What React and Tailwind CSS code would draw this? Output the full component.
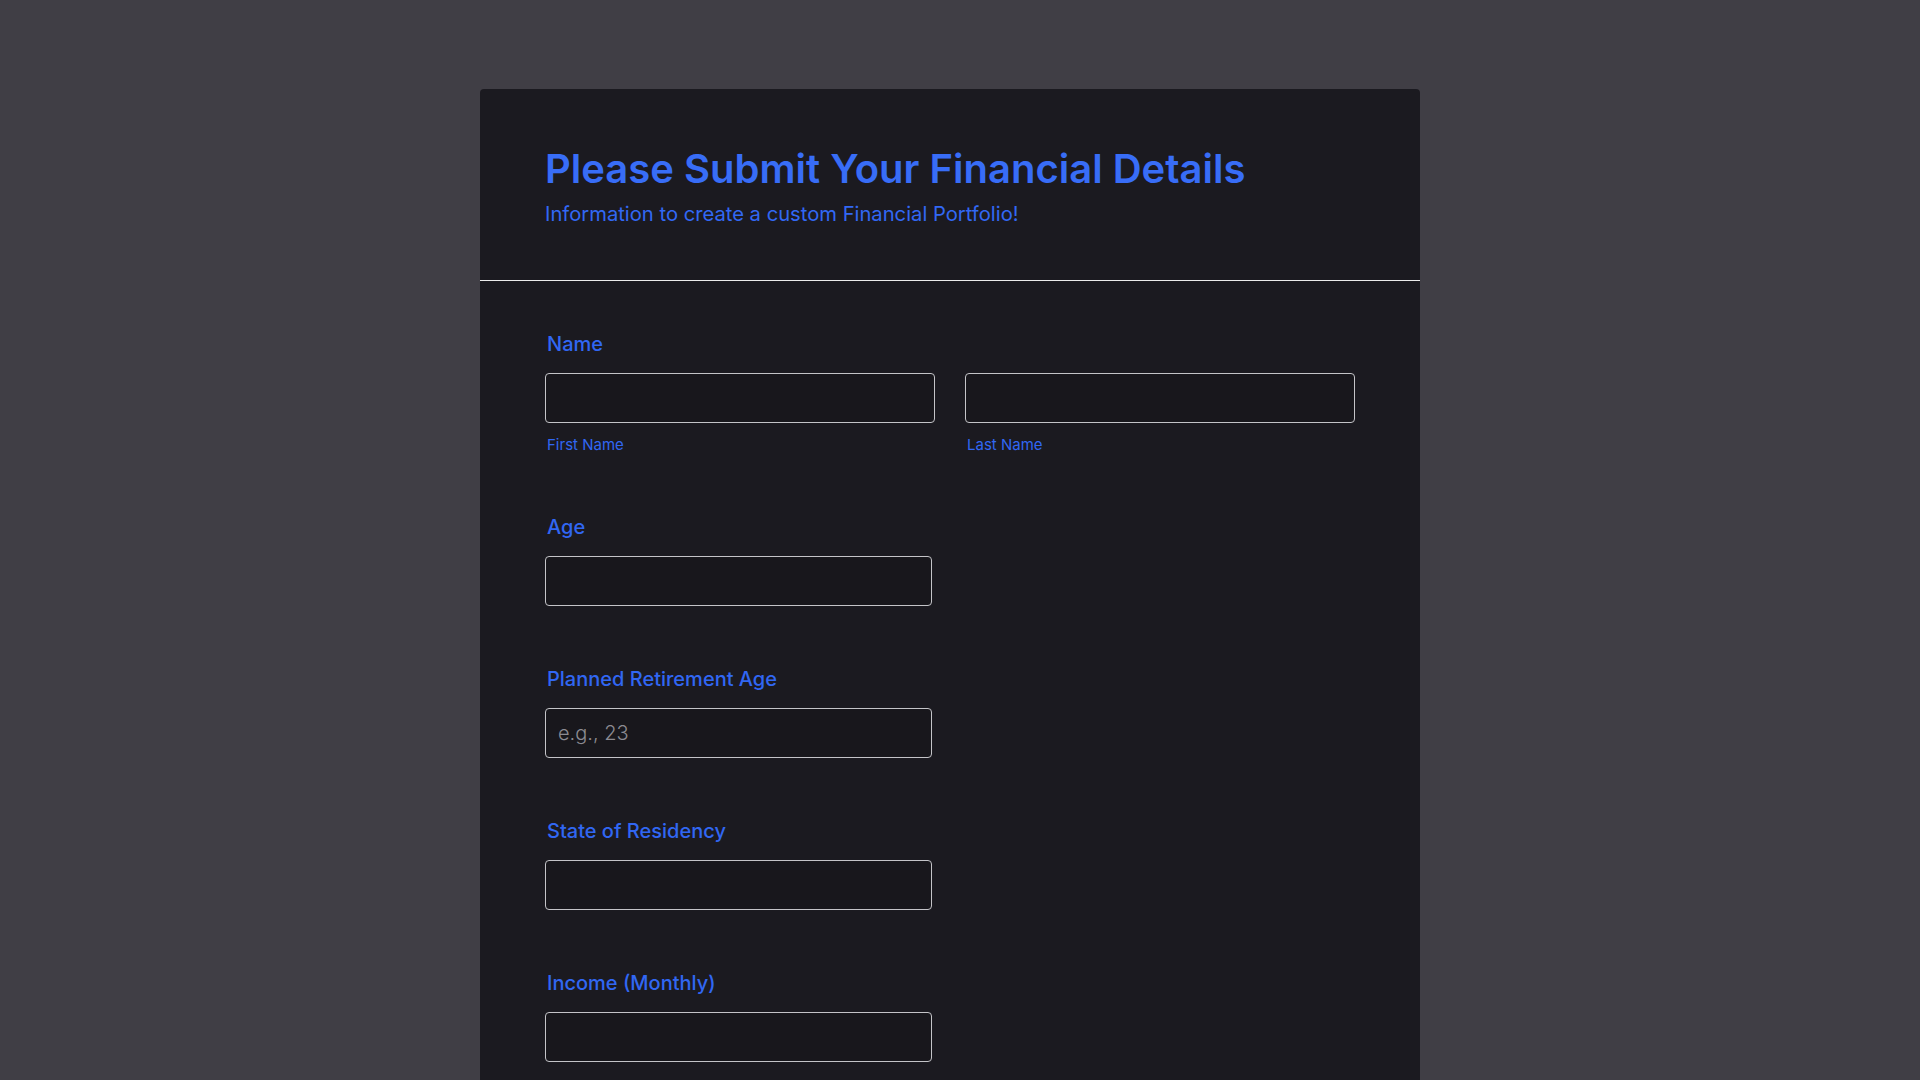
import { useState } from 'react'

const singleFields = [
  { id: 'age', label: 'Age', placeholder: '' },
  { id: 'retirement', label: 'Planned Retirement Age', placeholder: 'e.g., 23' },
  { id: 'state', label: 'State of Residency', placeholder: '' },
  { id: 'income', label: 'Income (Monthly)', placeholder: '' },
  { id: 'expenses', label: 'Expenses (Monthly)', placeholder: '' },
  { id: 'savings', label: 'Current Savings', placeholder: '' },
  { id: 'debt', label: 'Total Debt', placeholder: '' },
]

const inputClass =
  'h-[50px] w-full rounded-[4px] border border-[#c4c4c8] bg-[#18171c] px-[12px] text-[20px] font-light text-[#e5e5e5] outline-none placeholder:text-[#8b8a91]'

function FieldLabel({ children, htmlFor }) {
  return (
    <label
      htmlFor={htmlFor}
      className="mb-[17px] ml-[2px] block pt-[2px] text-[20px] font-medium leading-[24px] text-[#3167f3]"
    >
      {children}
    </label>
  )
}

function App() {
  const [values, setValues] = useState({})

  const update = (id) => (event) =>
    setValues((current) => ({ ...current, [id]: event.target.value }))

  return (
    <div
      className="h-screen overflow-y-scroll bg-[#403e45]"
      style={{ fontFamily: 'Inter, "Noto Sans", sans-serif' }}
    >
      <div className="pb-[80px] pr-[20px] pt-[89px]">
        <form className="mx-auto w-[940px] rounded-[4px] bg-[#1b1a20]">
          <header className="border-b border-[#ececec] pb-[52px] pl-[65px] pr-[65px] pt-[56px]">
            <h1 className="text-[40px] font-semibold leading-[48px] text-[#386df7]">
              Please Submit Your Financial Details
            </h1>
            <p className="mt-[7px] text-[20.2px] leading-[28px] text-[#3268f4]">
              Information to create a custom Financial Portfolio!
            </p>
          </header>

          <div className="flex flex-col gap-[59px] px-[65px] pb-[70px] pt-[49px]">
            <div>
              <FieldLabel htmlFor="first">Name</FieldLabel>
              <div className="grid grid-cols-2 gap-[30px]">
                <div>
                  <input id="first" className={inputClass} value={values.first || ''} onChange={update('first')} />
                  <span className="ml-[2px] mt-[12px] block text-[15px] leading-[19px] text-[#3167f3]">First Name</span>
                </div>
                <div>
                  <input id="last" className={inputClass} value={values.last || ''} onChange={update('last')} />
                  <span className="ml-[2px] mt-[12px] block text-[15px] leading-[19px] text-[#3167f3]">Last Name</span>
                </div>
              </div>
            </div>

            {singleFields.map((field) => (
              <div key={field.id}>
                <FieldLabel htmlFor={field.id}>{field.label}</FieldLabel>
                <div className="w-[387px]">
                  <input
                    id={field.id}
                    placeholder={field.placeholder}
                    className={inputClass}
                    value={values[field.id] || ''}
                    onChange={update(field.id)}
                  />
                </div>
              </div>
            ))}

            <div className="flex justify-center border-t border-[#3a3940] pt-[40px]">
              <button
                type="button"
                className="h-[50px] rounded-[4px] bg-[#2f64f0] px-[40px] text-[18px] font-medium text-white"
              >
                Submit
              </button>
            </div>
          </div>
        </form>
      </div>
    </div>
  )
}

export default App
